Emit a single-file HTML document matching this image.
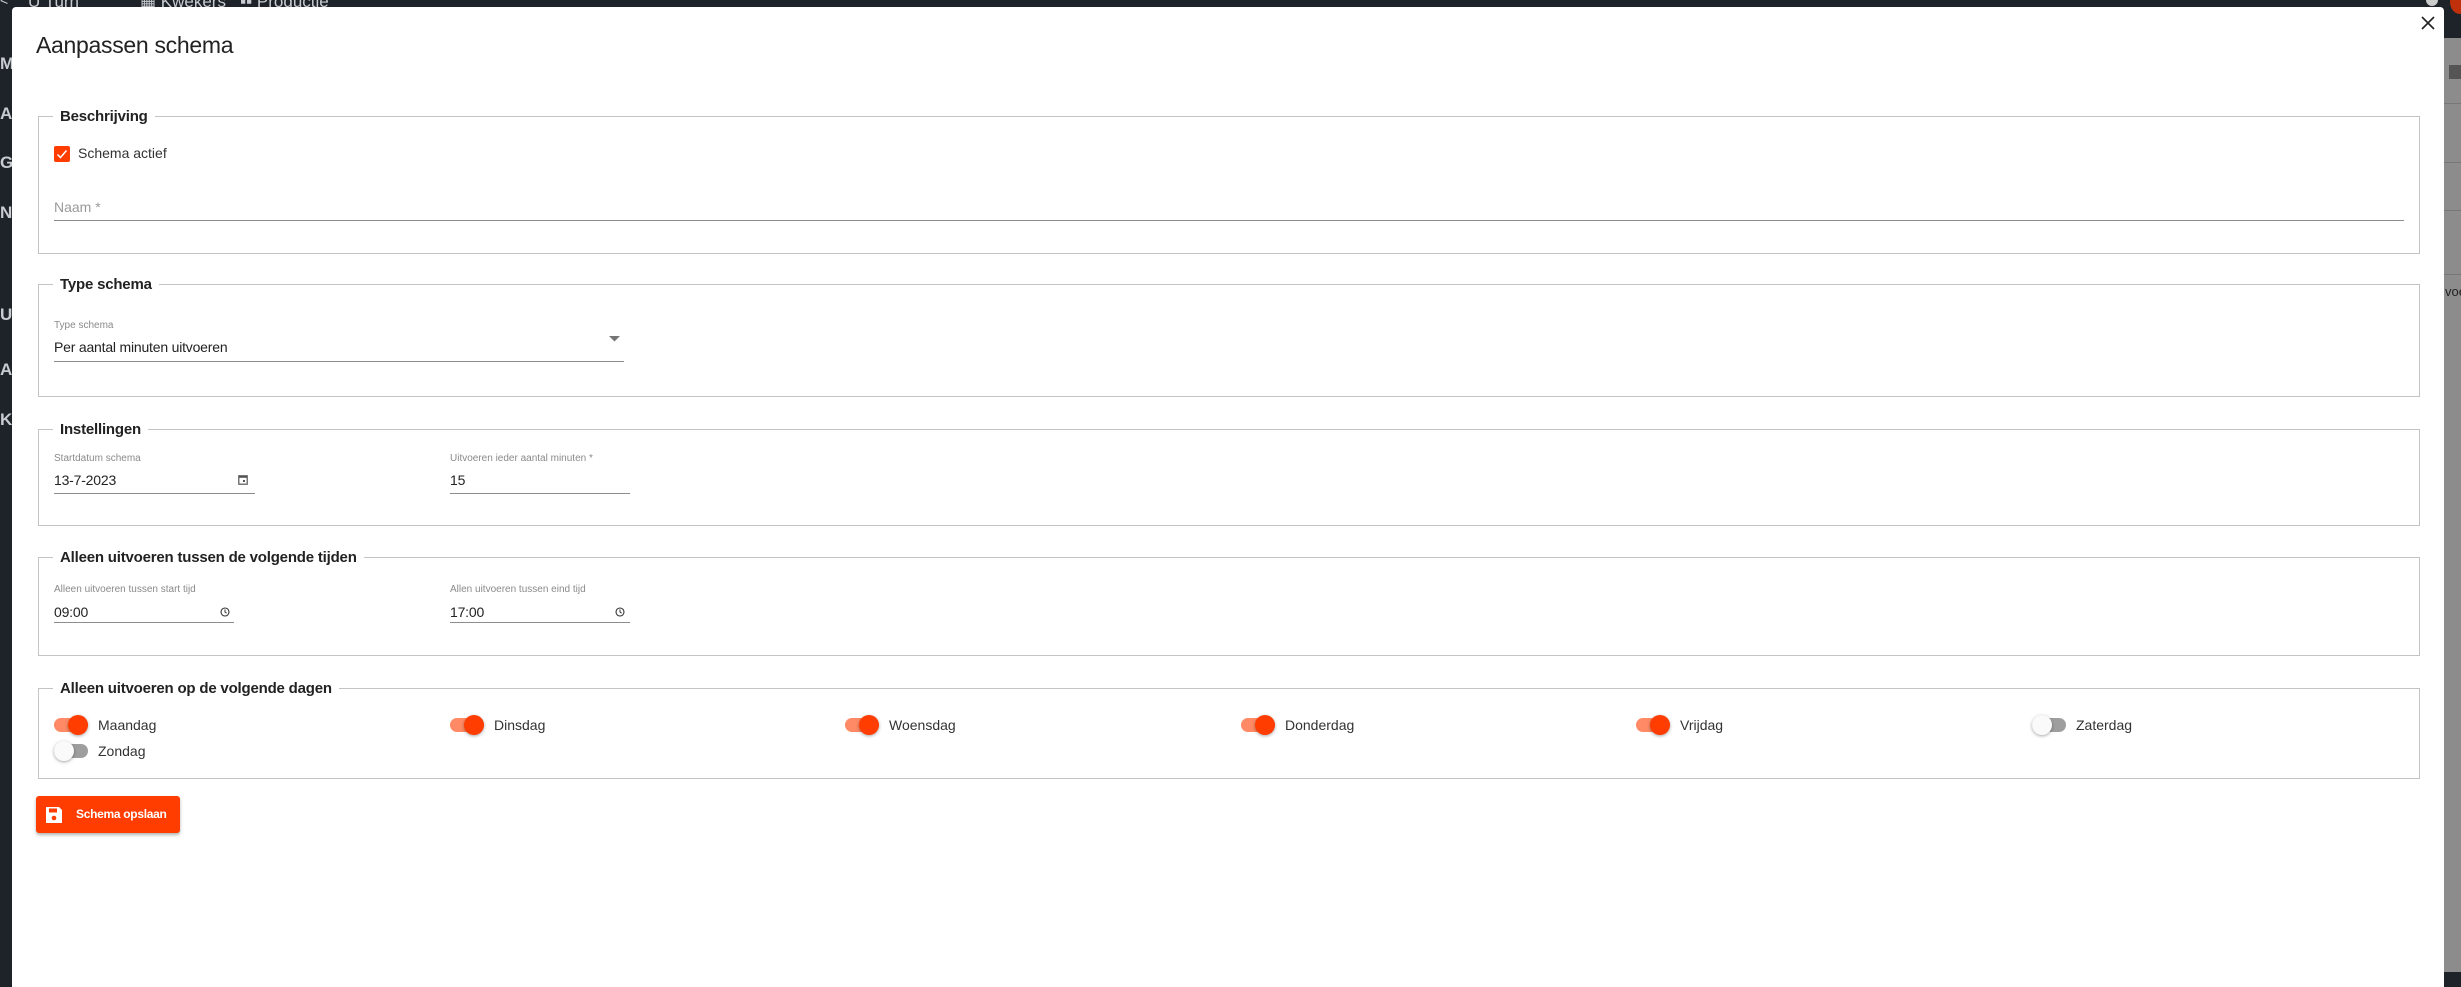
<!DOCTYPE html>
<html><head><meta charset="utf-8"><style>
*{margin:0;padding:0;box-sizing:border-box}
body{width:2461px;height:972px;overflow:hidden;background:#1e2329;font-family:"Liberation Sans",sans-serif;position:relative;color:#222}
.a{position:absolute;white-space:nowrap}
.side{color:#c8ccd0;font-weight:bold;font-size:17px;left:0}
.modal{position:absolute;left:12px;top:7px;width:2432px;height:980px;background:#fff;border-radius:4px 4px 0 0}
.fs{position:absolute;left:38px;width:2382px;border:1px solid #c4c4c4}
.lg{position:absolute;left:14px;top:-10px;background:#fff;padding:0 7px;font-weight:bold;font-size:15px;line-height:20px;color:#222;letter-spacing:-0.2px}
.lab{font-size:10px;color:#8a8a8a}
.val{font-size:14px;color:#222;letter-spacing:-0.2px}
.ul{position:absolute;height:1px;background:#8d8d8d}
.tg{position:absolute;width:34px;height:14px;border-radius:7px}
.tg i{position:absolute;top:-3px;width:20px;height:20px;border-radius:50%;box-shadow:0 1px 3px rgba(0,0,0,.35)}
.on{background:#ff8a65}.on i{left:14px;background:#ff3d00}
.off{background:#9e9e9e}.off i{left:0;background:#fafafa}
.day{font-size:14px;color:#333}
</style></head><body>
<div class="a" style="left:2444px;top:38px;width:17px;height:934px;background:#8c8c8c"></div>
<div class="a" style="left:2449px;top:65px;width:12px;height:14px;background:#555"></div>
<div class="a" style="left:2444px;top:103px;width:17px;height:1px;background:#777"></div>
<div class="a" style="left:2444px;top:162px;width:17px;height:1px;background:#777"></div>
<div class="a" style="left:2444px;top:210px;width:17px;height:1px;background:#777"></div>
<div class="a" style="left:2444px;top:274px;width:17px;height:1px;background:#777"></div>
<div class="a" style="left:2445px;top:284px;font-size:13px;color:#222">voe</div>
<div class="a" style="left:2426px;top:-6px;width:12px;height:12px;border-radius:50%;background:#ccc"></div>
<div class="a" style="left:2450px;top:-10px;width:20px;height:24px;border-radius:50%;background:#c0300a"></div>
<div class="a" style="left:28px;top:-8px;color:#c8ccd0;font-size:17px">U Turn</div>
<div class="a" style="left:140px;top:-8px;color:#c8ccd0;font-size:17px">▦ Kwekers &nbsp; ▪▪ Productie</div>
<div class="a" style="left:0;top:-8px;color:#c8ccd0;font-size:14px">&lt;</div>
<div class="a side" style="top:54px">M</div>
<div class="a side" style="top:104px">A</div>
<div class="a side" style="top:153px">G</div>
<div class="a side" style="top:203px">N</div>
<div class="a side" style="top:305px">U</div>
<div class="a side" style="top:360px">A</div>
<div class="a side" style="top:410px">K</div>

<div class="modal"></div>
<div class="a" style="left:36px;top:32px;font-size:23px;color:#222;letter-spacing:-0.3px">Aanpassen schema</div>
<svg class="a" style="left:2421px;top:16px" width="14" height="14" viewBox="0 0 14 14"><path d="M1 1L13 13M13 1L1 13" stroke="#222" stroke-width="1.6"/></svg>

<div class="fs" style="top:116px;height:138px"><div class="lg">Beschrijving</div></div>
<div class="a" style="left:54px;top:146px;width:16px;height:16px;background:#ff3d00;border-radius:2px"></div>
<svg class="a" style="left:54px;top:146px" width="16" height="16" viewBox="0 0 16 16"><path d="M3.5 8.5l3 3 6-7" stroke="#fff" stroke-width="1.5" fill="none"/></svg>
<div class="a" style="left:78px;top:145px;font-size:14px;color:#333">Schema actief</div>
<div class="a" style="left:54px;top:199px;font-size:14px;color:#9a9a9a">Naam *</div>
<div class="ul" style="left:54px;top:220px;width:2350px"></div>

<div class="fs" style="top:284px;height:113px"><div class="lg">Type schema</div></div>
<div class="a lab" style="left:54px;top:320px">Type schema</div>
<div class="a val" style="left:54px;top:339px">Per aantal minuten uitvoeren</div>
<svg class="a" style="left:609px;top:336px" width="12" height="6"><path d="M0 0h11l-5.5 5.5z" fill="#757575"/></svg>
<div class="ul" style="left:54px;top:361px;width:570px"></div>

<div class="fs" style="top:429px;height:97px"><div class="lg">Instellingen</div></div>
<div class="a lab" style="left:54px;top:453px">Startdatum schema</div>
<div class="a lab" style="left:450px;top:453px">Uitvoeren ieder aantal minuten *</div>
<div class="a val" style="left:54px;top:472px">13-7-2023</div>
<div class="a val" style="left:450px;top:472px">15</div>
<svg class="a" style="left:238px;top:474px" width="10" height="11" viewBox="0 0 10 11"><rect x="0.8" y="1.8" width="8.4" height="8.4" fill="none" stroke="#555" stroke-width="1.2"/><rect x="0.8" y="1.8" width="8.4" height="2" fill="#555"/><rect x="5" y="6" width="2" height="2" fill="#555"/></svg>
<div class="ul" style="left:54px;top:493px;width:201px"></div>
<div class="ul" style="left:450px;top:493px;width:180px"></div>

<div class="fs" style="top:557px;height:99px"><div class="lg">Alleen uitvoeren tussen de volgende tijden</div></div>
<div class="a lab" style="left:54px;top:584px">Alleen uitvoeren tussen start tijd</div>
<div class="a lab" style="left:450px;top:584px">Allen uitvoeren tussen eind tijd</div>
<div class="a val" style="left:54px;top:604px">09:00</div>
<div class="a val" style="left:450px;top:604px">17:00</div>
<svg class="a" style="left:220px;top:607px" width="10" height="10" viewBox="0 0 10 10"><circle cx="5" cy="5" r="4" fill="none" stroke="#333" stroke-width="1.1"/><path d="M5 2.5V5l1.6 1.2" stroke="#333" fill="none"/></svg>
<svg class="a" style="left:615px;top:607px" width="10" height="10" viewBox="0 0 10 10"><circle cx="5" cy="5" r="4" fill="none" stroke="#333" stroke-width="1.1"/><path d="M5 2.5V5l1.6 1.2" stroke="#333" fill="none"/></svg>
<div class="ul" style="left:54px;top:622px;width:180px"></div>
<div class="ul" style="left:450px;top:622px;width:180px"></div>

<div class="fs" style="top:688px;height:91px"><div class="lg">Alleen uitvoeren op de volgende dagen</div></div>
<div class="tg on" style="left:54px;top:718px"><i></i></div><div class="a day" style="left:98px;top:717px">Maandag</div>
<div class="tg on" style="left:450px;top:718px"><i></i></div><div class="a day" style="left:494px;top:717px">Dinsdag</div>
<div class="tg on" style="left:845px;top:718px"><i></i></div><div class="a day" style="left:889px;top:717px">Woensdag</div>
<div class="tg on" style="left:1241px;top:718px"><i></i></div><div class="a day" style="left:1285px;top:717px">Donderdag</div>
<div class="tg on" style="left:1636px;top:718px"><i></i></div><div class="a day" style="left:1680px;top:717px">Vrijdag</div>
<div class="tg off" style="left:2032px;top:718px"><i></i></div><div class="a day" style="left:2076px;top:717px">Zaterdag</div>
<div class="tg off" style="left:54px;top:744px"><i></i></div><div class="a day" style="left:98px;top:743px">Zondag</div>

<div class="a" style="left:36px;top:796px;width:144px;height:37px;background:#ff3d00;border-radius:3px;box-shadow:0 2px 3px rgba(0,0,0,.3)"></div>
<svg class="a" style="left:45px;top:806px" width="18" height="18" viewBox="0 0 18 18"><path d="M1 1h13l3 3v13H1z" fill="#fff"/><rect x="4" y="2.5" width="8" height="4" fill="#ff3d00"/><circle cx="9" cy="12" r="2.3" fill="#ff3d00"/></svg>
<div class="a" style="left:76px;top:807px;font-size:12px;font-weight:bold;color:#fff;letter-spacing:-0.3px">Schema opslaan</div>
</body></html>
